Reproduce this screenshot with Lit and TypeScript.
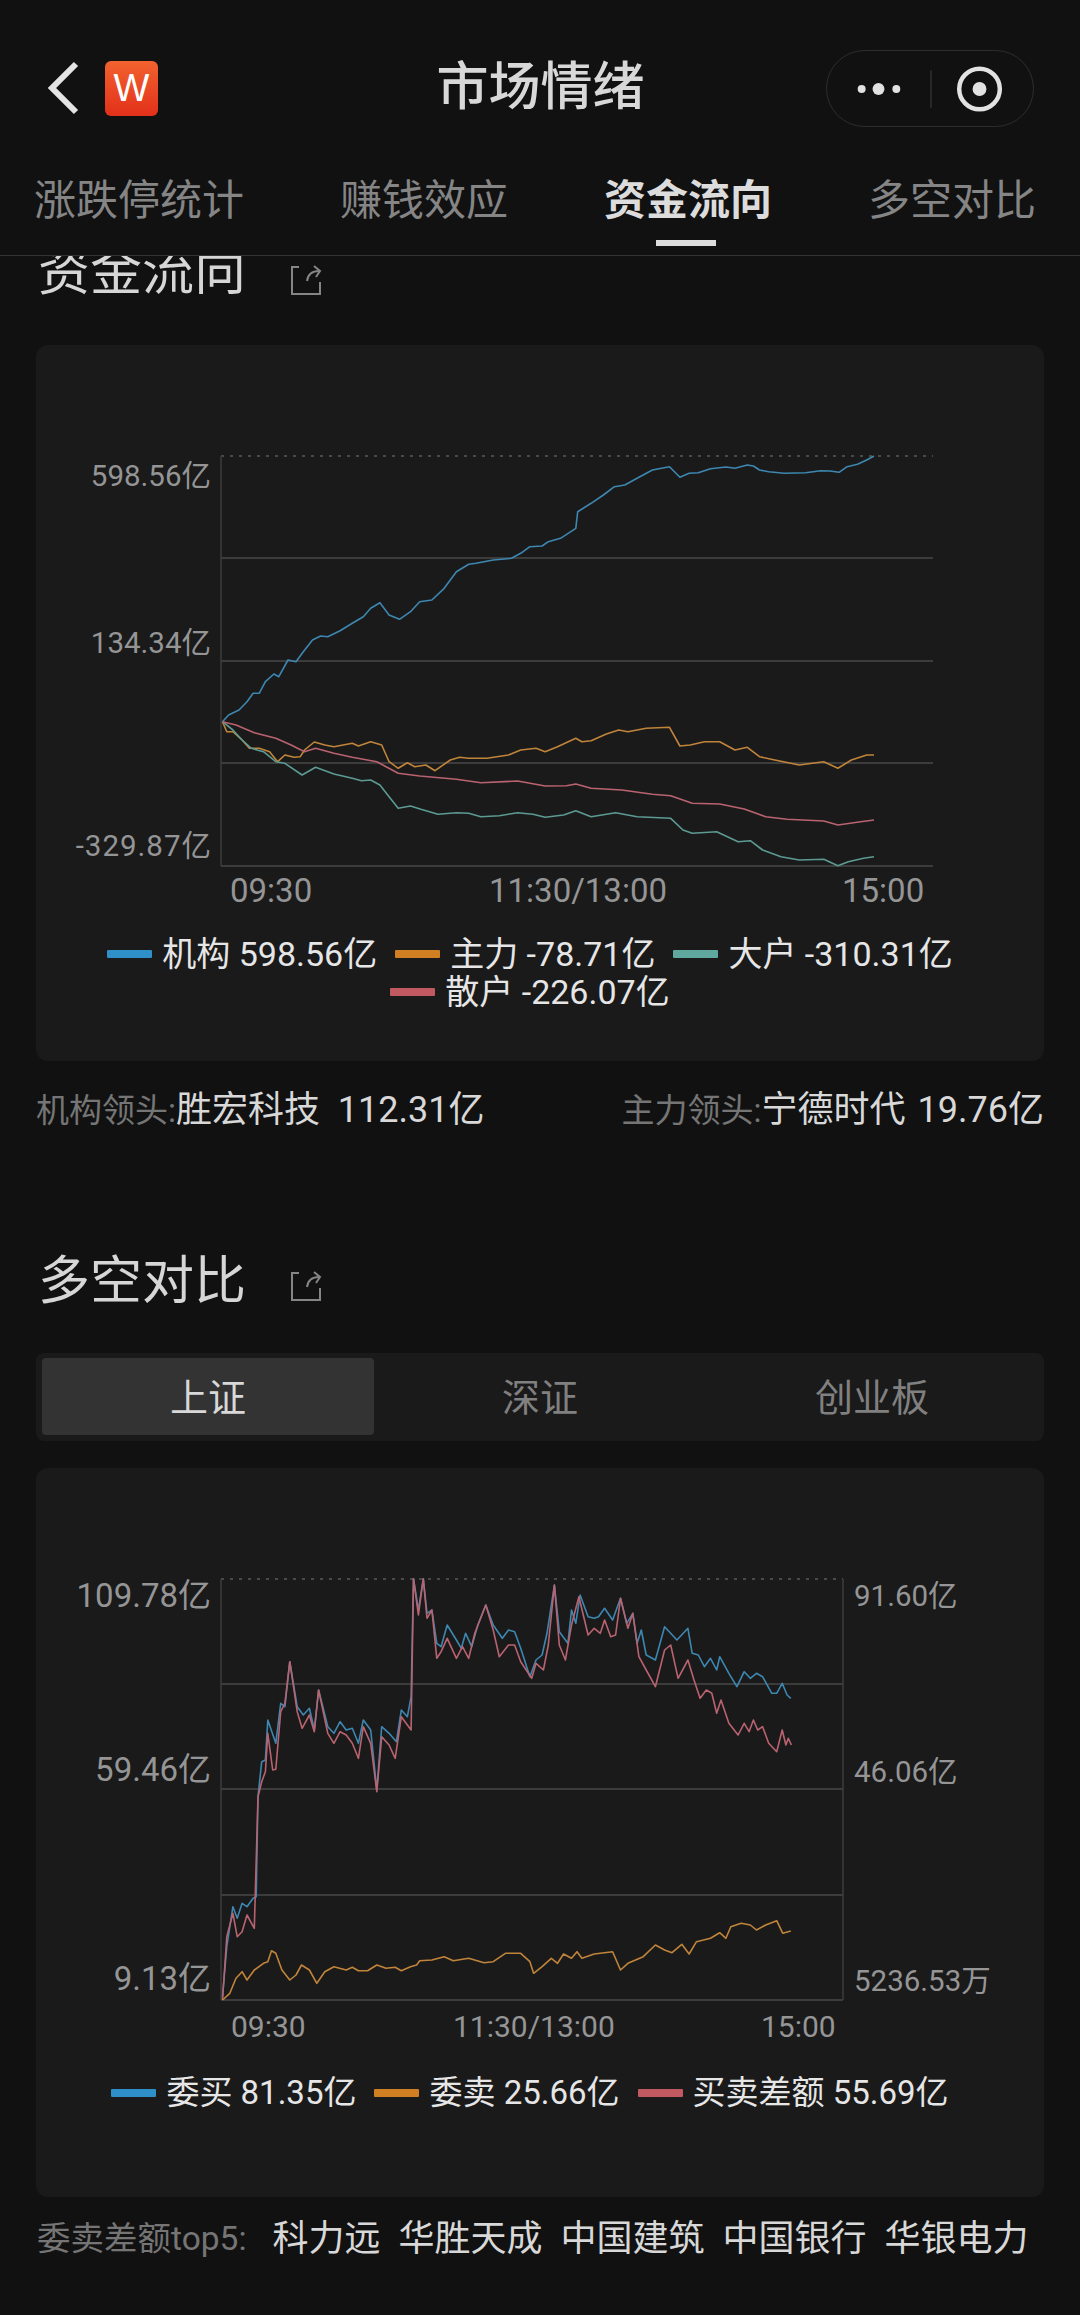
import { LitElement, html, css, svg } from "lit";
import { customElement } from "lit/decorators.js";

type P = number[];
const flow1 = {
  blue: [298,905,308,885,325,870,338,845,348,820,358,820,368,785,382,762,390,770,405,720,418,725,430,695,445,660,458,648,470,650,490,632,510,610,528,590,540,565,555,548,570,585,587,598,605,575,620,545,640,540,660,505,680,455,700,433,712,430,740,420,770,415,785,400,800,380,820,378,830,365,850,355,875,325,878,275,900,250,920,225,938,200,955,195,975,175,1000,150,1028,140,1045,172,1060,160,1075,158,1095,146,1120,141,1135,145,1155,135,1165,138,1175,150,1190,155,1215,160,1250,158,1275,152,1290,153,1305,157,1318,140,1335,133,1350,120,1362,108],
  orange: [298,905,305,935,315,935,330,960,342,985,358,985,375,995,388,1025,400,1005,415,1012,425,1010,432,990,448,966,465,975,480,980,495,975,510,970,520,978,540,965,558,975,570,1025,585,1045,600,1028,612,1040,630,1035,645,1052,670,1020,685,1012,700,1015,730,1015,765,1005,785,990,810,985,825,995,845,980,875,955,885,965,900,962,925,942,945,930,960,935,990,925,1028,922,1045,978,1062,975,1085,965,1110,965,1135,990,1155,982,1175,1010,1200,1020,1240,1035,1280,1025,1303,1045,1325,1020,1350,1005,1362,1005],
  teal: [298,905,315,930,330,960,345,985,365,995,385,1025,400,1030,428,1065,450,1042,480,1062,510,1075,525,1082,540,1080,555,1095,570,1130,585,1165,605,1158,622,1168,650,1183,680,1178,700,1180,720,1190,750,1187,780,1178,805,1183,825,1192,855,1185,875,1172,900,1190,940,1178,975,1190,1030,1195,1050,1230,1065,1240,1105,1235,1140,1265,1160,1262,1180,1290,1210,1310,1240,1320,1280,1318,1303,1337,1320,1325,1345,1315,1362,1310],
  red: [298,905,320,915,350,938,385,955,410,975,432,995,450,985,480,1000,510,1012,550,1025,585,1060,620,1068,680,1078,720,1088,780,1083,825,1098,860,1097,875,1092,900,1105,950,1110,1000,1123,1030,1127,1065,1150,1110,1152,1150,1167,1185,1190,1220,1198,1280,1203,1303,1215,1340,1205,1362,1200],
};
const flow2 = {
  blue: [298,1400,305,1250,315,1130,322,1165,330,1120,338,1130,348,1105,353,1100,356,800,362,695,368,690,372,570,385,640,393,520,400,530,408,395,420,530,430,555,440,535,448,600,455,480,470,590,480,610,490,575,500,600,510,595,520,640,528,570,540,600,550,780,558,590,570,610,582,635,590,540,600,560,606,500,610,146,618,240,626,146,632,250,640,240,648,340,655,350,665,285,680,330,688,355,695,310,705,350,715,285,728,225,740,285,755,325,765,300,775,305,785,355,800,440,810,390,820,375,828,310,840,165,848,305,862,340,868,240,875,280,882,195,895,260,905,265,912,260,922,235,935,270,948,205,958,280,968,250,975,340,982,300,990,375,1005,390,1020,290,1040,330,1058,295,1065,370,1075,375,1085,410,1095,385,1105,420,1110,380,1125,430,1138,470,1150,425,1160,445,1170,430,1180,440,1195,490,1203,490,1212,460,1220,495,1226,505],
  orange: [298,1410,310,1390,320,1345,330,1325,338,1350,350,1320,365,1300,372,1295,378,1262,385,1270,395,1320,408,1350,418,1335,427,1305,440,1320,452,1360,465,1325,480,1310,500,1320,510,1312,520,1322,535,1322,550,1305,565,1315,580,1312,590,1322,605,1310,615,1305,620,1292,640,1290,660,1280,675,1292,700,1285,725,1298,740,1295,760,1270,785,1270,800,1295,806,1330,820,1310,835,1285,845,1300,855,1272,868,1285,877,1265,885,1285,905,1272,935,1265,948,1320,960,1300,985,1280,1005,1245,1020,1260,1032,1268,1048,1243,1060,1272,1072,1235,1095,1225,1110,1208,1120,1225,1128,1190,1145,1180,1160,1185,1170,1200,1185,1185,1203,1172,1213,1210,1226,1203],
  red: [298,1410,305,1220,315,1150,322,1220,330,1205,338,1155,350,1195,356,800,362,755,368,725,372,610,380,720,385,718,393,545,400,520,408,395,420,545,428,595,440,555,448,605,455,480,470,610,480,640,490,605,500,615,510,640,520,685,528,590,540,640,550,785,558,620,570,645,580,685,590,560,606,600,610,146,618,255,626,146,632,265,640,240,648,385,655,365,665,325,680,385,690,350,700,385,710,310,728,225,740,300,750,380,765,345,775,345,785,395,803,445,810,400,822,420,830,345,840,165,848,345,858,390,868,285,880,200,895,315,905,295,915,310,922,270,932,320,940,315,948,205,960,295,968,250,978,380,990,420,1005,470,1020,360,1030,345,1042,445,1058,390,1068,450,1078,505,1088,480,1097,490,1105,550,1112,510,1125,580,1140,615,1150,580,1158,605,1165,570,1172,600,1180,590,1190,640,1203,665,1212,600,1218,645,1222,625,1227,645],
};

// Crop-traced points are mapped to card coordinates: x' = (40 + X/1.633) - 36, y' = top + Y/3.
const toPoints = (p: P, top: number) => {
  const out: string[] = [];
  for (let i = 0; i < p.length; i += 2) {
    out.push(`${(4 + p[i] / 1.633).toFixed(1)},${(top + p[i + 1] / 3).toFixed(1)}`);
  }
  return out.join(" ");
};

const LINE = { blue: "#3d87b0", orange: "#c0843a", teal: "#5c9a92", red: "#b96370" };

const shareIcon = html`<svg class="share" viewBox="0 0 32 32" fill="none" stroke="#858585" stroke-width="2">
  <path d="M9 3H2V30H30V18" /><path d="M17 17C18 10 22 7 29 7" /><path d="M24 2L30 7L26 13" />
</svg>`;

@customElement("app-root")
export class AppRoot extends LitElement {
  static styles = css`
    :host {
      display: block;
      width: 1080px;
      height: 2315px;
      overflow: hidden;
      background: #111112;
      color: #e6e6e6;
      font-family: Roboto, "Noto Sans CJK SC", sans-serif;
    }
    .header {
      height: 255px;
      border-bottom: 1px solid #333334;
      box-sizing: content-box;
      display: flex;
      flex-direction: column;
      background: #111112;
      position: relative;
      z-index: 2;
    }
    .nav {
      height: 176px;
      display: flex;
      align-items: center;
      padding: 0 46px 0 47px;
    }
    .back { width: 32px; height: 56px; margin-right: 26px; }
    .logo {
      width: 53px;
      height: 55px;
      border-radius: 6px;
      background: linear-gradient(180deg, #f2622f, #e2301a);
      color: #fff;
      font-size: 38px;
      line-height: 55px;
      text-align: center;
      font-family: "Liberation Sans", sans-serif;
    }
    .page-title {
      flex: 1;
      text-align: center;
      font-size: 52px;
      font-weight: 500;
      line-height: 60px;
      color: #d8d8d8;
      padding-left: 97px;
    }
    .capsule {
      width: 208px;
      height: 77px;
      box-sizing: border-box;
      border: 1.5px solid #2d2d2e;
      border-radius: 39px;
      display: flex;
      align-items: center;
    }
    .capsule svg { width: 208px; height: 77px; display: block; }
    .tabs {
      display: flex;
      gap: 96px;
      padding-left: 34px;
      height: 79px;
      margin-top: -2px;
    }
    .tab {
      font-size: 42px;
      line-height: 54px;
      color: #858585;
      white-space: nowrap;
      position: relative;
      font-weight: 400;
    }
    .tab.on { color: #dcdcdc; font-weight: 700; }
    .tab.on::after {
      content: "";
      position: absolute;
      left: 52px;
      top: 66px;
      width: 60px;
      height: 6px;
      background: #dcdcdc;
    }
    .scroll { padding: 0 36px; overflow: hidden; height: 2059px; }
    .title-row {
      display: flex;
      align-items: center;
      height: 60px;
      padding-left: 2px;
      font-size: 52px;
      color: #d6d6d6;
    }
    .title-row.first { margin-top: -19px; }
    .share { width: 32px; height: 32px; margin-left: 44px; margin-top: 16px; display: block; }
    .title-row.first .share { margin-top: 26px; }
    .section-two .share { margin-top: 20px; }
    .card { background: #1a1a1b; border-radius: 12px; }
    .card.one { margin-top: 48px; height: 716px; }
    .card.two { margin-top: 27px; height: 729px; }
    .plot { display: block; width: 1008px; }
    .plot text { font-family: Roboto, "Noto Sans CJK SC", sans-serif; fill: #959596; }
    .plot text.wide { letter-spacing: 1px; }
    .legend {
      display: flex;
      flex-wrap: wrap;
      justify-content: center;
      column-gap: 18px;
      row-gap: 0;
      line-height: 38px;
      color: #e6e6e6;
    }
    .legend.one { margin: 0 64px; padding-right: 20px; font-size: 34px; }
    .legend.two { padding-right: 20px; font-size: 33px; }
    .item { display: flex; align-items: center; white-space: nowrap; }
    .swatch { width: 45px; height: 8px; margin-right: 10px; border-radius: 1px; }
    .leaders {
      display: flex;
      justify-content: space-between;
      margin-top: 28px;
      line-height: 42px;
      font-size: 36px;
      color: #d8d8d8;
      white-space: nowrap;
    }
    .leaders .gap { margin-left: 12px; }
    .muted { font-size: 33px; color: #757575; }
    .section-two { margin-top: 114px; }
    .segment {
      margin-top: 47px;
      height: 88px;
      box-sizing: border-box;
      padding: 5px 6px 6px;
      background: #1a1a1b;
      border-radius: 8px;
      display: grid;
      grid-template-columns: repeat(3, 1fr);
    }
    .seg {
      display: flex;
      align-items: center;
      justify-content: center;
      font-size: 38px;
      color: #808080;
      border-radius: 4px;
      padding-bottom: 4px;
    }
    .seg.on { background: #333334; color: #d8d8d8; }
    .tops {
      display: flex;
      align-items: center;
      margin-top: 21px;
      line-height: 42px;
      font-size: 36px;
      color: #d8d8d8;
      white-space: nowrap;
    }
    .tops .muted { font-size: 33.5px; margin-right: 26px; padding-left: 1px; }
    .tops span + span { margin-right: 18px; }
  `;

  private grid(lines: number[], top: number, bottom: number, right: number) {
    return svg`
      <line x1="185" x2=${right} y1=${top} y2=${top} stroke="#5a5a5b" stroke-width="1.5" stroke-dasharray="3 6" />
      ${lines.map(
        (y) => svg`<line x1="185" x2=${right} y1=${y} y2=${y} stroke="#3c3c3d" stroke-width="2" />`
      )}
      <line x1="185" x2="185" y1=${top} y2=${bottom} stroke="#3c3c3d" stroke-width="1.5" />
    `;
  }

  private series(data: P, top: number, color: string) {
    return svg`<polyline points=${toPoints(data, top)} fill="none" stroke=${color} stroke-width="1.6" stroke-linejoin="round" />`;
  }

  render() {
    const t1 = 420 - 345;
    const t2 = 1530 - 1468;
    return html`
      <div class="header">
        <div class="nav">
          <svg class="back" viewBox="0 0 32 56" fill="none" stroke="#e4e4e4" stroke-width="6">
            <path d="M29 4L5 28L29 52" />
          </svg>
          <div class="logo">W</div>
          <div class="page-title">市场情绪</div>
          <div class="capsule">
            <svg viewBox="0 0 208 77">
              <circle cx="35" cy="39" r="4" fill="#e2e2e2" />
              <circle cx="52" cy="39" r="6" fill="#e2e2e2" />
              <circle cx="70" cy="39" r="4" fill="#e2e2e2" />
              <line x1="105" x2="105" y1="20" y2="58" stroke="#303031" stroke-width="1.5" />
              <circle cx="154" cy="39" r="20.5" fill="none" stroke="#e2e2e2" stroke-width="4.5" />
              <circle cx="154" cy="39" r="7" fill="#e2e2e2" />
            </svg>
          </div>
        </div>
        <div class="tabs">
          <div class="tab">涨跌停统计</div>
          <div class="tab">赚钱效应</div>
          <div class="tab on">资金流向</div>
          <div class="tab">多空对比</div>
        </div>
      </div>

      <div class="scroll">
        <div class="title-row first">资金流向${shareIcon}</div>
        <div class="card one">
          <svg class="plot" width="1008" height="590" viewBox="0 0 1008 590">
            ${this.grid([213, 316, 418, 521], 111, 521, 897)}
            ${this.series(flow1.blue, t1, LINE.blue)}
            ${this.series(flow1.orange, t1, LINE.orange)}
            ${this.series(flow1.teal, t1, LINE.teal)}
            ${this.series(flow1.red, t1, LINE.red)}
            <g font-size="29.5" text-anchor="end">
              <text x="175" y="141">598.56亿</text>
              <text x="175" y="308">134.34亿</text>
              <text class="wide" x="176" y="511">-329.87亿</text>
            </g>
            <g font-size="33">
              <text x="194" y="557">09:30</text>
              <text x="453" y="557">11:30/13:00</text>
              <text x="806" y="557">15:00</text>
            </g>
          </svg>
          <div class="legend one">
            ${this.item("#2e8fc9", "机构 598.56亿")}
            ${this.item("#d07f22", "主力 -78.71亿")}
            ${this.item("#5fa8a0", "大户 -310.31亿")}
            ${this.item("#c05a60", "散户 -226.07亿")}
          </div>
        </div>
        <div class="leaders">
          <div><span class="muted">机构领头:</span>胜宏科技&nbsp;&nbsp;112.31亿</div>
          <div><span class="muted">主力领头:</span>宁德时代<span class="gap">19.76亿</span></div>
        </div>

        <div class="title-row section-two">多空对比${shareIcon}</div>
        <div class="segment">
          <div class="seg on">上证</div>
          <div class="seg">深证</div>
          <div class="seg">创业板</div>
        </div>
        <div class="card two">
          <svg class="plot" width="1008" height="606" viewBox="0 0 1008 606">
            ${this.grid([216, 321, 427, 532], 111, 532, 807)}
            <line x1="807" x2="807" y1="111" y2="532" stroke="#3c3c3d" stroke-width="1.5" />
            ${this.series(flow2.blue, t2, LINE.blue)}
            ${this.series(flow2.red, t2, LINE.red)}
            ${this.series(flow2.orange, t2, LINE.orange)}
            <g font-size="33" text-anchor="end">
              <text x="175" y="139">109.78亿</text>
              <text x="175" y="313">59.46亿</text>
              <text x="175" y="522">9.13亿</text>
            </g>
            <g font-size="29.5">
              <text x="818" y="138">91.60亿</text>
              <text x="818" y="314">46.06亿</text>
              <text x="818" y="523">5236.53万</text>
            </g>
            <g font-size="30">
              <text x="195" y="569">09:30</text>
              <text x="417" y="569">11:30/13:00</text>
              <text x="725" y="569">15:00</text>
            </g>
          </svg>
          <div class="legend two">
            ${this.item("#2e8fc9", "委买 81.35亿")}
            ${this.item("#d07f22", "委卖 25.66亿")}
            ${this.item("#c05a60", "买卖差额 55.69亿")}
          </div>
        </div>
        <div class="tops">
          <span class="muted">委卖差额top5:</span>
          <span>科力远</span><span>华胜天成</span><span>中国建筑</span><span>中国银行</span><span>华银电力</span>
        </div>
      </div>
    `;
  }

  private item(color: string, label: string) {
    return html`<div class="item"><div class="swatch" style="background:${color}"></div>${label}</div>`;
  }
}
